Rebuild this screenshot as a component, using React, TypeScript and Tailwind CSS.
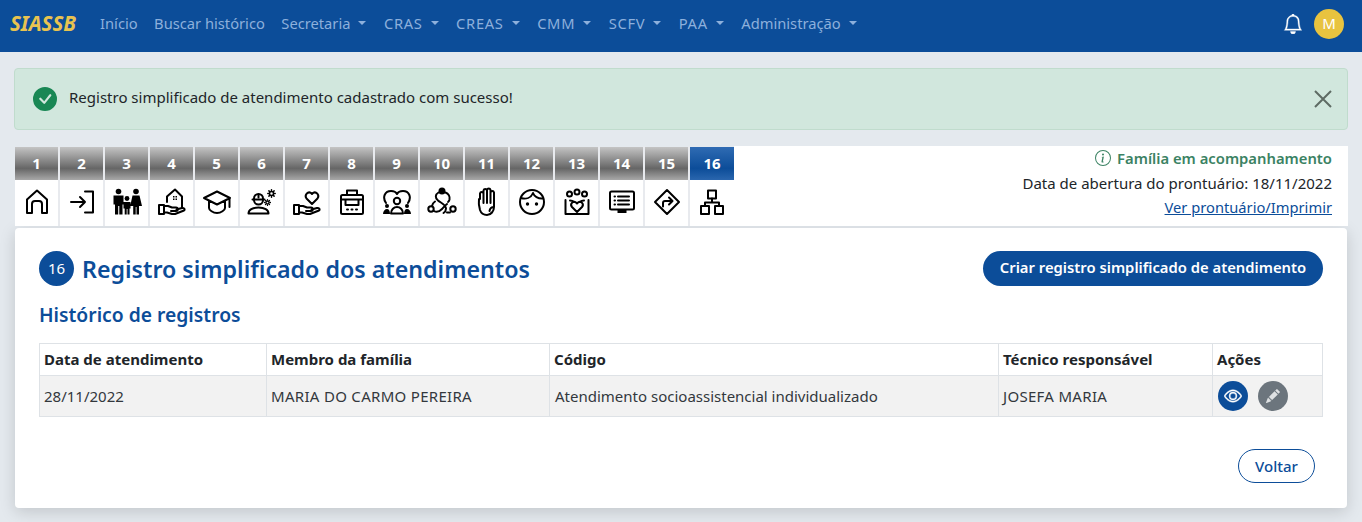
import { ReactNode } from 'react';
import { BsCheckCircleFill, BsEye, BsPencilFill, BsBell, BsInfoCircle } from 'react-icons/bs';

const navItems = [
  { label: 'Início' },
  { label: 'Buscar histórico' },
  { label: 'Secretaria', caret: true },
  { label: 'CRAS', caret: true, caps: true },
  { label: 'CREAS', caret: true, caps: true },
  { label: 'CMM', caret: true, caps: true },
  { label: 'SCFV', caret: true, caps: true },
  { label: 'PAA', caret: true, caps: true },
  { label: 'Administração', caret: true },
];

function Ico({ children }: { children: ReactNode }) {
  return (
    <svg width="30" height="30" viewBox="0 0 30 30" fill="none" stroke="#000" strokeWidth="2" strokeLinecap="round" strokeLinejoin="round">
      {children}
    </svg>
  );
}

const hand = <path d="M2 18h5v9H2zM7 19h4l4 1.500h4a1.700 1.700 0 0 1 0 3.500h-5M7 25.500h3l5 1.500h3l9-3.500c1.500-1-.2-3-2-2.500l-5.500 1.500" />;

const icons: ReactNode[] = [
  <Ico key="1"><path d="M5 26V12.500L15 3.500l10 9V26h-5V17a3 3 0 0 0-3-3h-4a3 3 0 0 0-3 3v9z" /></Ico>,
  <Ico key="2"><path d="M4 15h14M13 10l5 5-5 5M18 4.500h8v21h-8" /></Ico>,
  <Ico key="3">
    <g fill="#000" stroke="none">
      <circle cx="6.500" cy="4.500" r="2.800" /><circle cx="24" cy="4.500" r="2.800" /><circle cx="15" cy="11.500" r="2.400" />
      <path d="M1.500 8.500h10v9H10.500V27.500H7.300v-8.500H6.200v8.500H3v-10H1.500zM20.500 8.500h7l2.500 10.500h-3v8.500h-2.500v-7.500h-.8v7.500h-2.500v-8.500h-3zM11.500 15h7v6.500h-1V27.500h-2v-5.500h-.8v5.500h-2v-6h-1.200z" />
    </g>
  </Ico>,
  <Ico key="4">
    {hand}
    <path d="M10 15V9.500L18 2.500l7 7V21" />
    <g fill="#000" stroke="none"><rect x="16" y="9" width="1.500" height="1.500" /><rect x="18.500" y="9" width="1.500" height="1.500" /><rect x="16" y="11.500" width="1.500" height="1.500" /><rect x="18.500" y="11.500" width="1.500" height="1.500" /></g>
  </Ico>,
  <Ico key="5"><path d="M2 11l13-6.500L28 11l-13 6.500zM7 14v7c0 2 4 5 8 5s8-3 8-5v-7M27.500 11.500V20" /></Ico>,
  <Ico key="6">
    <path d="M1.500 26.500c0-3.500 4-6 10-6s10 2.500 10 6z" />
    <path d="M7 13a4.500 4.500 0 0 0 9 0" />
    <path d="M5.500 12.500h12M7 11.500a4.500 4.500 0 0 1 9 0" />
    <path d="M11.500 7.500v3" />
    <circle cx="24.500" cy="6.500" r="2" strokeWidth="1.500" />
    <path d="M24.500 2.800v.8M24.500 9.400v.8M20.800 6.500h.8M27.400 6.500h.8M21.900 3.900l.6.6M26.500 8.500l.6.6M27.100 3.900l-.6.6M22.500 8.500l-.6.6" strokeWidth="1.500" />
    <circle cx="20.500" cy="15.500" r="1.500" strokeWidth="1.300" />
    <path d="M20.500 12.600v.5M20.500 17.900v.5M17.600 15.500h.5M22.900 15.500h.5M18.500 13.500l.3.3M22.200 17.200l.3.3M22.500 13.500l-.3.3M18.800 17.200l-.3.3" strokeWidth="1.300" />
  </Ico>,
  <Ico key="7">
    {hand}
    <path d="M20 17l-5.500-5.500c-2.500-3.500 1.500-7.500 4.500-5.500l1 1 1-1c3-2 7 2 4.500 5.500z" />
  </Ico>,
  <Ico key="8">
    <rect x="4" y="8" width="22" height="19" rx="1.500" />
    <path d="M10 8V3.500h10V8M4 12.500h22M8.500 12.500v5.500h13v-5.500" />
    <path d="M10 22.500h1M14.500 22.500h1M19 22.500h1" />
  </Ico>,
  <Ico key="9">
    <path d="M4 16C0 10 3 4 9 4c3 0 5 1 6 3 1-2 3-3 6-3 6 0 9 6 5 12" />
    <circle cx="15" cy="14" r="3.200" /><path d="M9 26.500c0-4 3-6.500 6-6.500s6 2.500 6 6.500z" />
    <g fill="#000" stroke="none"><circle cx="5" cy="19" r="2" /><circle cx="25" cy="19" r="2" /><path d="M1 27c0-3 2-5 4-5s3 2 3 5zM22 27c0-3 1-5 3-5s4 2 4 5z" /></g>
  </Ico>,
  <Ico key="10">
    <circle cx="15" cy="4" r="2.500" fill="#000" /><circle cx="4" cy="22" r="2.700" /><circle cx="26" cy="22" r="2.700" />
    <path d="M11.500 5.500C8 7.500 8 11 11 13.500c3 2.500 8 4 8 8 0 2-1 3.500-2.500 4.500M18.500 5.500c3 1 4.500 4 4 7-.2 1-.8 2-1.500 2.500M5 19c.5-2 1.500-3.500 3-4.500M7 24c3 2 6 0 8-2 1.500-1.500 3-3.500 5-5M23 25.500h-3" />
  </Ico>,
  <Ico key="11"><path d="M8 12V6.500a1.800 1.800 0 0 1 3.500 0V3.500a1.800 1.800 0 0 1 3.500 0V3a1.800 1.800 0 0 1 3.500 0V5.500a1.800 1.800 0 0 1 3.500 0V20c0 4-3 8-7 8s-6-2-7-5l-1-5c-.3-1 0-3 0-6zM11.500 6.500V16M15 3.500V16M18.500 5v11M22 20c-2 0-4 1-4.500 4" /></Ico>,
  <Ico key="12"><circle cx="15" cy="15" r="12" /><path d="M4 11c5 1.500 10 0 12-5 1 3 5 6 10 5.500" /><g fill="#000" stroke="none"><circle cx="10.500" cy="17" r="1.700" /><circle cx="19.500" cy="17" r="1.700" /></g></Ico>,
  <Ico key="13">
    <circle cx="7.500" cy="7" r="2.500" /><circle cx="15" cy="5" r="2.500" /><circle cx="22.500" cy="7" r="2.500" />
    <path d="M3.500 13v14h23V13M8 13.500c1.500 0 3 .5 4 1.500M22 13.500c-1.500 0-3 .5-4 1.500" />
    <path d="M15 25l-5-5c-2.500-3 1-6.500 4-4.500l1 1 1-1c3-2 6.500 1.500 4 4.500z" />
  </Ico>,
  <Ico key="14">
    <rect x="3" y="4.500" width="24" height="18" rx="1.500" />
    <path d="M11 9.500h11M11 13.500h11M11 17.500h11M7.500 9.500h.5M7.500 13.500h.5M7.500 17.500h.5" />
    <path d="M10.500 24.500h9" strokeWidth="3" strokeLinecap="butt" />
  </Ico>,
  <Ico key="15"><path d="M15 3l12 12-12 12L3 15zM11 19.500V16a2 2 0 0 1 2-2h7M17 10.500l3.500 3.500-3.500 3.500" /></Ico>,
  <Ico key="16"><rect x="11" y="3.500" width="8" height="8" /><rect x="4" y="19" width="8" height="8" /><rect x="18" y="19" width="8" height="8" /><path d="M15 11.500v4M8 19v-3.500h14V19" /></Ico>,
];

function Navbar() {
  return (
    <nav className="h-[52px] bg-[#0c4d99] flex items-center pl-[10px] pr-[18px] pb-[5px]">
      <span className="text-[20.500px] font-bold italic text-[#e8c350] mr-[24px]">SIASSB</span>
      <ul className="flex items-center gap-[16.500px] text-[14.700px] text-[#8db0dc] flex-1">
        {navItems.map((item) => (
          <li key={item.label} className={item.caps ? 'flex items-center tracking-[0.7px]' : 'flex items-center'}>
            {item.label}
            {item.caret && <span className="ml-[8px] mr-[1px] w-0 h-0 border-x-[4.500px] border-x-transparent border-t-[4.500px] border-t-[#8db0dc]" />}
          </li>
        ))}
      </ul>
      <BsBell className="text-white mr-[11px] text-[20px] stroke-white stroke-[0.3px]" />
      <div className="w-[30px] h-[30px] rounded-full bg-[#e8c33f] text-white text-[15px] flex items-center justify-center">M</div>
    </nav>
  );
}

function Tabs() {
  return (
    <div className="flex">
      {icons.map((icon, i) => (
        <div key={i} className="w-[45px] h-[80px] pt-[1px] border-r-2 border-r-[#e8eaee] flex flex-col last:w-[44px] last:border-r-0">
          <div
            className={
              i === 15
                ? 'h-[33px] bg-[linear-gradient(#2f6bb3,#0c4d99_65%,#2a66ae)] text-white text-[15px] font-bold flex items-center justify-center'
                : 'h-[33px] bg-[linear-gradient(#c4c4c4,#666666_65%,#a8a8a8)] text-white text-[15px] font-bold flex items-center justify-center'
            }
          >
            {i + 1}
          </div>
          <div className="flex-1 bg-white flex items-center justify-center pb-[3px]">{icon}</div>
        </div>
      ))}
    </div>
  );
}

export default function App() {
  return (
    <div className="min-h-[522px] bg-[#e4e9ee] font-['Noto_Sans',sans-serif] text-[#212529]">
      <Navbar />
      <div className="px-[14px] pt-[16px]">
        <div className="h-[62px] rounded-[4px] border border-[#c0dccd] bg-[#d1e7dd] flex items-center pl-[18px] pr-[15px]">
          <BsCheckCircleFill className="text-[#198754] text-[24px] mr-[12px] shrink-0" />
          <span className="flex-1 text-[15px] pb-[4px]">Registro simplificado de atendimento cadastrado com sucesso!</span>
          <svg width="18" height="18" viewBox="0 0 18 18" stroke="#5e6b64" strokeWidth="2"><path d="M1 1l16 16M17 1L1 17" /></svg>
        </div>
        <div className="mt-[16px] flex pl-[1px]">
          <Tabs />
          <div className="flex-1 bg-white h-[80px] text-right pr-[16px] text-[15px] leading-[24.500px]">
            <div className="flex items-center justify-end font-semibold text-[#3b8263] text-[14.800px]">
              <BsInfoCircle className="mr-[6px] text-[16px]" />
              Família em acompanhamento
            </div>
            <div>Data de abertura do prontuário: 18/11/2022</div>
            <a className="text-[#0c4d99] underline text-[14.700px]">Ver prontuário/Imprimir</a>
          </div>
        </div>
        <main className="mx-[1px] mt-[2px] h-[280px] bg-white rounded-[4px] shadow-[0_4px_16px_rgba(0,0,0,0.15)] px-[24px] pt-[23px]">
          <div className="flex items-center justify-between h-[35px]">
            <div className="flex items-center">
              <span className="w-[35px] h-[35px] rounded-full bg-[#0c4d99] text-white text-[15px] flex items-center justify-center mr-[8px]">16</span>
              <h1 className="text-[23.200px] font-semibold text-[#0c4d99] pt-[2px]">Registro simplificado dos atendimentos</h1>
            </div>
            <button className="h-[35px] w-[340px] rounded-full bg-[#0c4d99] text-white text-[14.800px] font-semibold pb-[2px]">
              Criar registro simplificado de atendimento
            </button>
          </div>
          <h2 className="mt-[16px] text-[19.300px] leading-[26px] font-semibold text-[#0c4d99] pb-[2px]">Histórico de registros</h2>
          <table className="mt-[13px] w-[1283px] table-fixed border-collapse text-[15px]">
            <colgroup>
              <col className="w-[227px]" />
              <col className="w-[283px]" />
              <col className="w-[449px]" />
              <col className="w-[214px]" />
              <col className="w-[110px]" />
            </colgroup>
            <thead>
              <tr className="h-[32px] text-left">
                {['Data de atendimento', 'Membro da família', 'Código', 'Técnico responsável', 'Ações'].map((h) => (
                  <th key={h} className="border border-[#dee2e6] px-[4px] pb-[1px] font-bold">{h}</th>
                ))}
              </tr>
            </thead>
            <tbody>
              <tr className="h-[41px] bg-[#f2f2f2] text-[#33383d]">
                <td className="border border-[#dee2e6] px-[4px]">28/11/2022</td>
                <td className="border border-[#dee2e6] px-[4px] tracking-[0.3px]">MARIA DO CARMO PEREIRA</td>
                <td className="border border-[#dee2e6] pl-[5px] pr-[4px]">Atendimento socioassistencial individualizado</td>
                <td className="border border-[#dee2e6] px-[4px] tracking-[0.3px]">JOSEFA MARIA</td>
                <td className="border border-[#dee2e6] px-[5px]">
                  <div className="flex gap-[10px]">
                    <span className="w-[30px] h-[30px] rounded-full bg-[#0c4d99] text-white flex items-center justify-center text-[18px]"><BsEye className="stroke-white stroke-[0.4px]" /></span>
                    <span className="w-[30px] h-[30px] rounded-full bg-[#6c757d] text-[#dfe1e3] flex items-center justify-center text-[14px]"><BsPencilFill /></span>
                  </div>
                </td>
              </tr>
            </tbody>
          </table>
          <div className="flex justify-end mt-[32px] pr-[8px]">
            <button className="w-[77px] h-[34px] rounded-full border border-[#0c4d99] text-[#0c4d99] text-[15px] font-medium">Voltar</button>
          </div>
        </main>
      </div>
    </div>
  );
}
